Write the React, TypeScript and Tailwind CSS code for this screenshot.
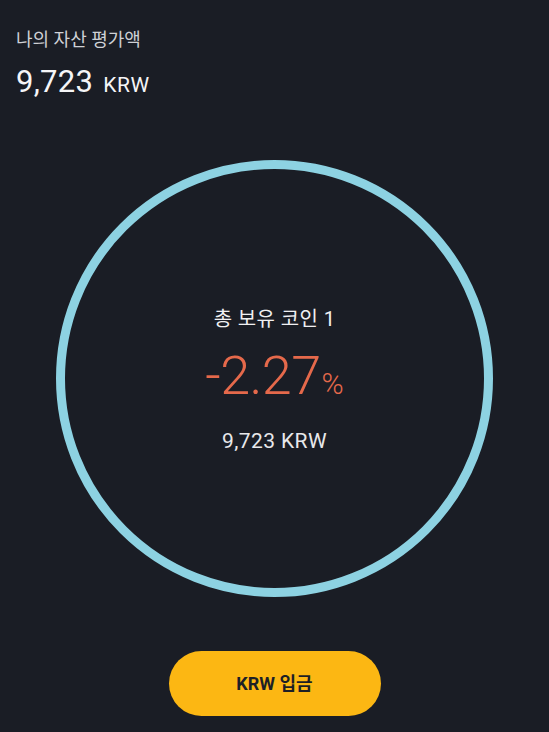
import React from 'react';

const font = { fontFamily: 'Roboto, "Noto Sans CJK KR", sans-serif' };

export default function App() {
  return (
    <div className="h-[732px] w-full overflow-hidden bg-[#1a1d25] text-white" style={font}>
      {/* header */}
      <div className="px-4 pt-[28px]">
        <div className="text-[18px] leading-[24px] text-[#cfd1d6]">나의 자산 평가액</div>
        <div className="mt-[12px] flex items-baseline gap-[10px] leading-[36px]">
          <span className="text-[31px] tracking-[0.3px] text-[#f5f5f7]">9,723</span>
          <span className="text-[21px] tracking-[0.5px] text-[#f5f5f7]">KRW</span>
        </div>
      </div>

      {/* holdings ring */}
      <div className="mt-[57px] flex justify-center">
        <div className="flex h-[437px] w-[437px] flex-col items-center justify-center rounded-full border-[9px] border-[#8dd2e2] pt-[2px]">
          <div className="text-[20px] leading-[28px] tracking-[0.4px] text-[#f0f0f2]">총 보유 코인 1</div>
          <div className="mt-[13px] flex items-baseline leading-[60px] text-[#e5694b]">
            <span className="text-[54px] font-light tracking-[-0.6px]">-2.27</span>
            <span className="ml-[1px] text-[30px] font-light">%</span>
          </div>
          <div className="mt-[13px] text-[21px] leading-[28px] tracking-[0.4px] text-[#e8e8ea]">9,723 KRW</div>
        </div>
      </div>

      {/* deposit */}
      <div className="mt-[54px] flex justify-center">
        <button className="flex h-[65px] w-[212px] items-center justify-center rounded-full bg-[#fcb713] text-[18px] font-bold text-[#1d1f26]">
          KRW 입금
        </button>
      </div>
    </div>
  );
}
